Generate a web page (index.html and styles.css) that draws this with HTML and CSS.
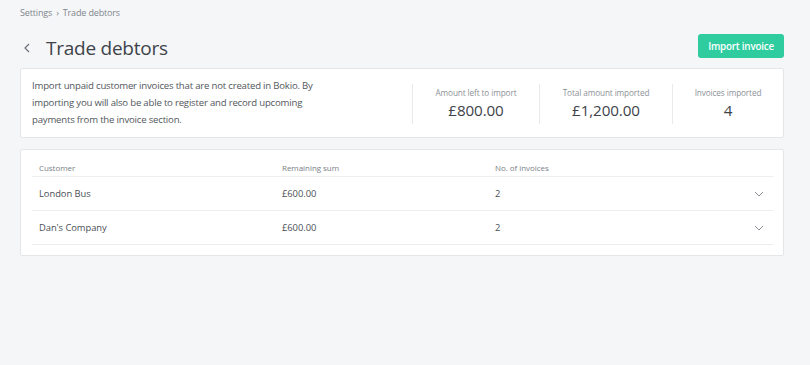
FILE: index.html
```html
<!DOCTYPE html>
<html>
<head>
<meta charset="utf-8">
<link rel="stylesheet" href="styles.css">
</head>
<body>
<div class="page">
  <nav class="crumbs"><span>Settings</span><span class="sep">›</span><span>Trade debtors</span></nav>
  <header class="head">
    <div class="title-wrap">
      <svg class="back" width="8" height="10" viewBox="0 0 8 10"><path d="M6 1 L2 5 L6 9" fill="none" stroke="#6b7178" stroke-width="1.2"/></svg>
      <h1>Trade debtors</h1>
    </div>
    <button class="btn">Import invoice</button>
  </header>
  <section class="card info">
    <p class="desc">Import unpaid customer invoices that are not created in Bokio. By importing you will also be able to register and record upcoming payments from the invoice section.</p>
    <div class="stats">
      <div class="stat s1"><div class="label">Amount left to import</div><div class="value">£800.00</div></div>
      <div class="stat s2"><div class="label">Total amount imported</div><div class="value">£1,200.00</div></div>
      <div class="stat s3"><div class="label">Invoices imported</div><div class="value">4</div></div>
    </div>
  </section>
  <section class="card list">
    <div class="row hdr"><span class="c1">Customer</span><span class="c2">Remaining sum</span><span class="c3">No. of invoices</span><span class="c4"></span></div>
    <div class="row"><span class="c1">London Bus</span><span class="c2">£600.00</span><span class="c3">2</span><span class="c4"><svg width="10" height="6" viewBox="0 0 10 6"><path d="M1 1 L5 5 L9 1" fill="none" stroke="#8a9097" stroke-width="1"/></svg></span></div>
    <div class="row"><span class="c1">Dan's Company</span><span class="c2">£600.00</span><span class="c3">2</span><span class="c4"><svg width="10" height="6" viewBox="0 0 10 6"><path d="M1 1 L5 5 L9 1" fill="none" stroke="#8a9097" stroke-width="1"/></svg></span></div>
  </section>
</div>
</body>
</html>
```
FILE: styles.css
```css
* { box-sizing: border-box; }
html, body { margin: 0; padding: 0; background: #f5f6f8; }
body { font-family: "Open Sans", "Noto Sans", sans-serif; color: #4a4f55; }
.page { padding: 6px 26px 0 20px; width: 810px; }
.crumbs { font-size: 9px; letter-spacing: -0.15px; color: #80868d; height: 14px; line-height: 14px; display: flex; gap: 4px; }
.head { display: flex; justify-content: space-between; align-items: center; margin-top: 13px; height: 30px; }
.title-wrap { display: flex; align-items: center; }
.back { margin-left: 3px; margin-right: 15px; }
h1 { margin: 0; font-weight: 400; font-size: 19px; letter-spacing: -0.25px; color: #3e434a; line-height: 30px; }
.btn { width: 86px; height: 24px; border: none; border-radius: 3px; background: #2ecc9f; color: #fff; font-family: inherit; font-weight: 600; font-size: 9.8px; letter-spacing: -0.2px; padding: 0; margin-top: -4px; }
.card { background: #fff; border: 1px solid #e4e7ea; border-radius: 2px; }
.info { margin-top: 5px; height: 70px; display: flex; justify-content: space-between; align-items: center; padding: 0 0 0 11px; }
.desc { margin: 0; margin-top: -2px; width: 290px; font-size: 9.6px; letter-spacing: -0.2px; line-height: 17px; color: #52575d; }
.stats { display: flex; height: 40px; margin-top: 2px; }
.stat { border-left: 1px solid #e8eaed; text-align: center; display: flex; flex-direction: column; justify-content: center; }
.s1 { width: 127px; }
.s2 { width: 133px; }
.s3 { width: 111px; }
.label { font-size: 8.2px; letter-spacing: -0.1px; color: #8d9298; line-height: 12px; }
.value { font-size: 15.2px; letter-spacing: -0.1px; color: #3e434a; line-height: 22px; }
.list { margin-top: 11px; padding: 10px 10px 10px 11px; }
.row { display: flex; align-items: center; height: 34px; border-bottom: 1px solid #eceef0; font-size: 9.4px; letter-spacing: -0.05px; color: #4a4f55; }
.row.hdr { height: 17px; font-size: 8px; color: #7a8087; align-items: flex-end; padding-bottom: 3px; }
.c1 { width: 250px; padding-left: 7px; }
.c2 { width: 213px; }
.c3 { flex: 1; }
.c4 { width: 19px; display: flex; }
```
